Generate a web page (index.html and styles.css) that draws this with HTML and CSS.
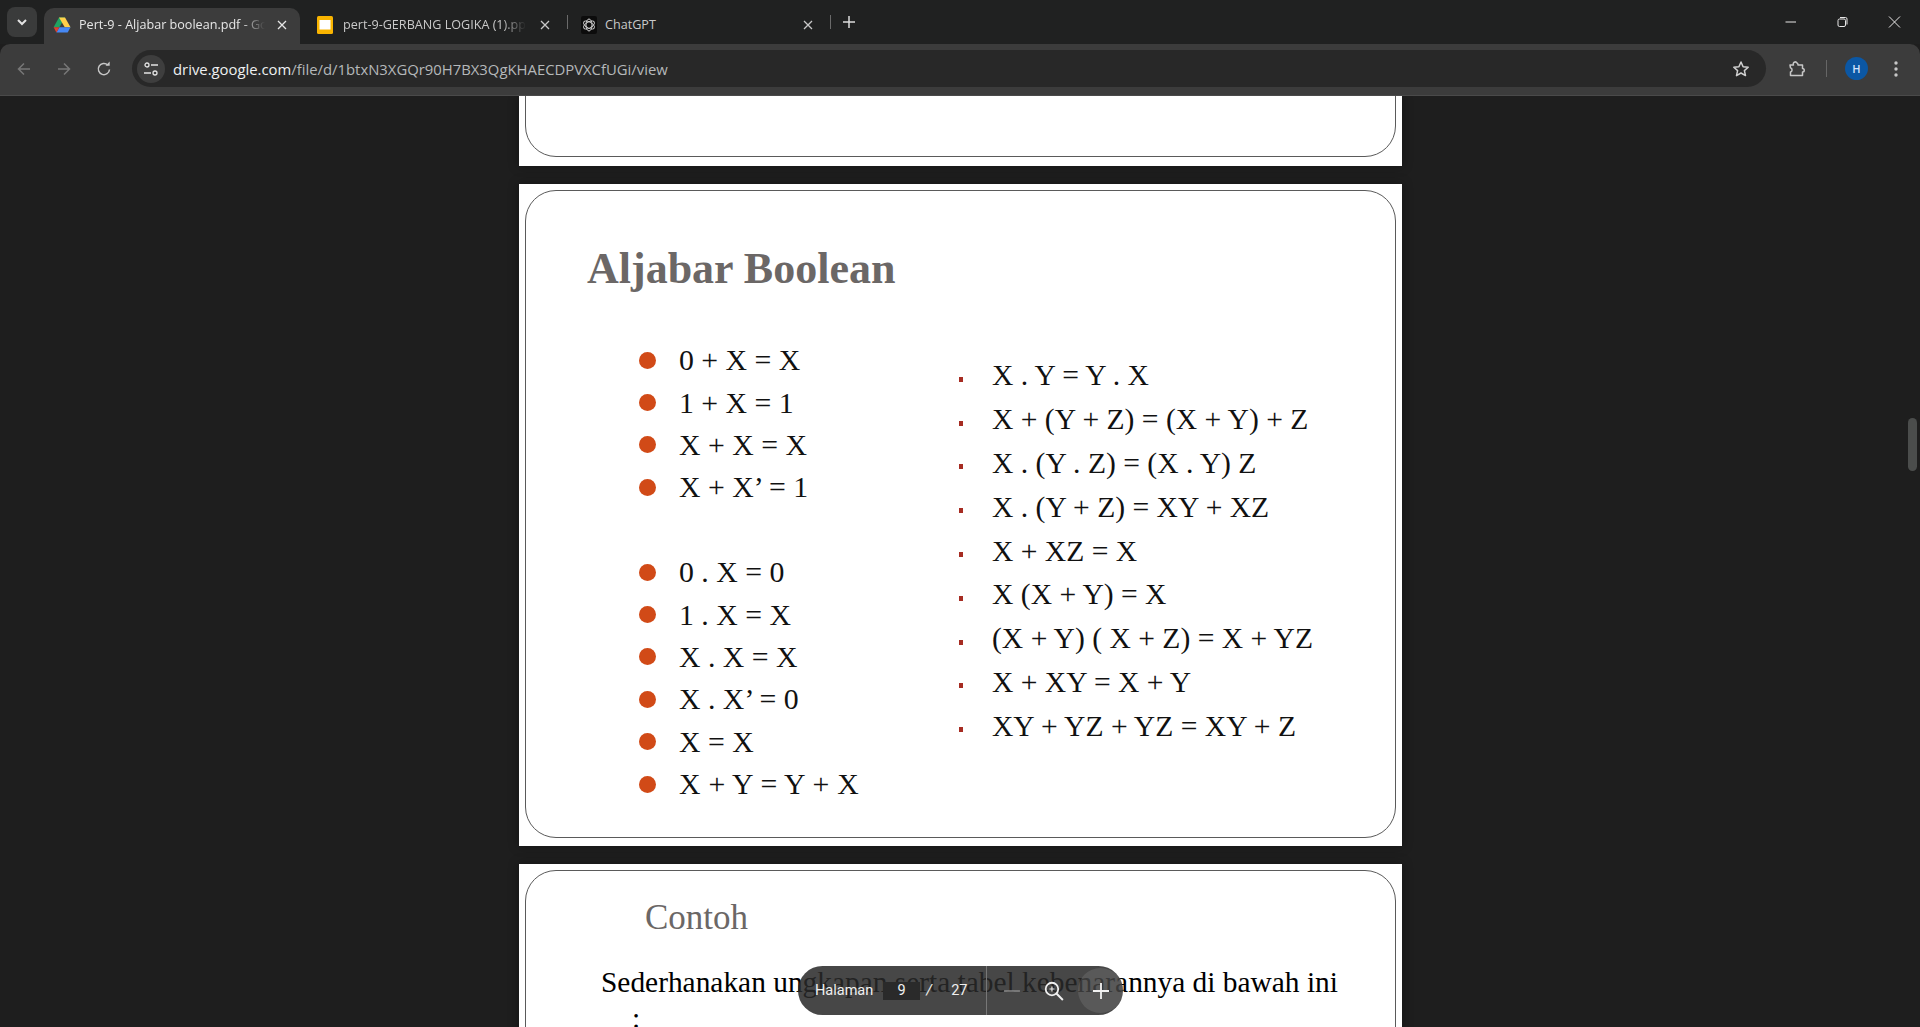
FILE: index.html
```html
<!DOCTYPE html>
<html lang="id">
<head>
<meta charset="utf-8">
<title>Pert-9 - Aljabar boolean.pdf</title>
<link rel="stylesheet" href="styles.css">
</head>
<body>
<div class="browser">
  <header class="tabstrip">
    <button class="tab-search"><svg width="12" height="12" viewBox="0 0 12 12"><path d="M2 4l4 4 4-4" fill="none" stroke="#e3e3e3" stroke-width="2"/></svg></button>
    <div class="tab tab-active">
      <svg class="fav" viewBox="0 0 24 22"><path d="M8 1h8L8.500 14H0.800z" fill="#1fa463"/><path d="M16 1l7.400 13h-7.700L8 1z" fill="#ffd04b"/><path d="M8.500 14h14.900L19.600 21H4.600z" fill="#4688f4"/><path d="M.8 14h7.700L4.600 21z" fill="#e0402f"/></svg>
      <span class="tab-title">Pert-9 - Aljabar boolean.pdf - Google Drive</span>
      <svg class="tab-x" viewBox="0 0 10 10"><path d="M1 1l8 8M9 1l-8 8" stroke="#e6e6e6" stroke-width="1.300"/></svg>
    </div>
    <div class="tab tab-slides">
      <svg class="fav" viewBox="0 0 16 18"><rect width="16" height="18" rx="1.500" fill="#f9b400"/><rect x="2.500" y="4" width="11" height="9.500" fill="#fff"/></svg>
      <span class="tab-title">pert-9-GERBANG LOGIKA (1).pptx</span>
      <svg class="tab-x" viewBox="0 0 10 10"><path d="M1 1l8 8M9 1l-8 8" stroke="#c8c8c8" stroke-width="1.300"/></svg>
    </div>
    <i class="tab-sep"></i>
    <div class="tab tab-wide">
      <svg class="fav" viewBox="0 0 16 18"><rect width="16" height="18" rx="2" fill="#0c0c0c"/><g fill="none" stroke="#cfcfcf" stroke-width="1"><ellipse cx="8" cy="9" rx="3" ry="6"/><ellipse cx="8" cy="9" rx="3" ry="6" transform="rotate(60 8 9)"/><ellipse cx="8" cy="9" rx="3" ry="6" transform="rotate(120 8 9)"/></g></svg>
      <span class="tab-title">ChatGPT</span>
      <svg class="tab-x" viewBox="0 0 10 10"><path d="M1 1l8 8M9 1l-8 8" stroke="#c8c8c8" stroke-width="1.300"/></svg>
    </div>
    <i class="tab-sep"></i>
    <svg class="new-tab" viewBox="0 0 12 12"><path d="M6 0v12M0 6h12" stroke="#dcdcdc" stroke-width="1.500"/></svg>
    <div class="window-controls">
      <svg viewBox="0 0 12 12"><path d="M1 6h10.500" stroke="#e8e8e8"/></svg>
      <svg viewBox="0 0 12 12"><rect x="1.500" y="3" width="7.500" height="7.500" rx="1.500" fill="none" stroke="#e8e8e8"/><path d="M3.500 1.500h5.500a1.500 1.500 0 0 1 1.500 1.500v5.500" fill="none" stroke="#e8e8e8"/></svg>
      <svg viewBox="0 0 12 12"><path d="M.5.500l11 11M11.500.500l-11 11" stroke="#e8e8e8"/></svg>
    </div>
  </header>

  <nav class="toolbar">
    <svg class="tool tool-dim" viewBox="0 0 16 16"><path d="M14 8H3M8 2.500L2.500 8 8 13.500" fill="none" stroke="#777" stroke-width="1.500"/></svg>
    <svg class="tool tool-dim" viewBox="0 0 16 16"><path d="M2 8h11M8 2.500L13.500 8 8 13.500" fill="none" stroke="#777" stroke-width="1.500"/></svg>
    <svg class="tool" viewBox="0 0 16 16"><path d="M13.500 8.500A5.600 5.600 0 1 1 11.800 4" fill="none" stroke="#c7c7c7" stroke-width="1.500"/><path d="M9.500 4.700h4.200V.500z" fill="#c7c7c7"/></svg>
    <div class="omnibox">
      <span class="chip"><svg viewBox="0 0 16 16" width="16" height="16"><g fill="none" stroke="#e3e3e3" stroke-width="1.300"><circle cx="4" cy="4" r="2"/><path d="M8 4h7M1 12h7"/><circle cx="12" cy="12" r="2"/></g></svg></span>
      <span class="url"><b>drive.google.com</b>/file/d/1btxN3XGQr90H7BX3QgKHAECDPVXCfUGi/view</span>
      <svg class="star" viewBox="0 0 18 18"><path d="M9 2l2.100 4.700 5.100.500-3.800 3.400 1.100 5L9 13l-4.500 2.600 1.100-5L1.800 7.200l5.100-.500z" fill="none" stroke="#d0d0d0" stroke-width="1.500" stroke-linejoin="round"/></svg>
    </div>
    <svg class="ext" viewBox="0 0 18 18"><path d="M2 5h3.500a2 2 0 0 1 3.500-2 2 2 0 0 1 1 2H14.500v3.500a1.700 1.700 0 0 1 0 3.500v3.500H2.500V12a2.200 2.200 0 0 0 0-4.200z" fill="none" stroke="#c7c7c7" stroke-width="1.500" stroke-linejoin="round"/></svg>
    <i class="tool-sep"></i>
    <span class="avatar">H</span>
    <svg class="menu" viewBox="0 0 4 16"><circle cx="2" cy="2" r="1.700" fill="#c7c7c7"/><circle cx="2" cy="8" r="1.700" fill="#c7c7c7"/><circle cx="2" cy="14" r="1.700" fill="#c7c7c7"/></svg>
  </nav>

  <main class="viewer">
    <section class="page page-prev"><div class="frame"></div></section>

    <section class="page page-main">
      <div class="frame frame-main">
        <h1 class="slide-title">Aljabar Boolean</h1>
        <div class="columns">
          <ul class="list-left">
            <li>0 + X = X</li>
            <li>1 + X = 1</li>
            <li>X + X = X</li>
            <li>X + X’ = 1</li>
            <li class="blank"></li>
            <li>0 . X = 0</li>
            <li>1 . X = X</li>
            <li>X . X = X</li>
            <li>X . X’ = 0</li>
            <li>X = X</li>
            <li class="spaced">X + Y = Y + X</li>
          </ul>
          <ul class="list-right">
            <li>X . Y = Y . X</li>
            <li>X + (Y + Z) = (X + Y) + Z</li>
            <li>X . (Y . Z) = (X . Y) Z</li>
            <li>X . (Y + Z) = XY + XZ</li>
            <li>X + XZ = X</li>
            <li>X (X + Y) = X</li>
            <li>(X + Y) ( X + Z) = X + YZ</li>
            <li>X + XY = X + Y</li>
            <li>XY + YZ + YZ = XY + Z</li>
          </ul>
        </div>
      </div>
    </section>

    <section class="page page-next">
      <div class="frame frame-next">
        <h2 class="next-title">Contoh</h2>
        <p class="next-text">Sederhanakan ungkapan serta tabel kebenarannya di bawah ini</p>
        <p class="next-colon">:</p>
      </div>
    </section>

    <div class="pdf-bar">
      <span class="bar-label">Halaman</span>
      <span class="bar-input">9</span>
      <span class="bar-slash">/</span>
      <span class="bar-total">27</span>
      <i class="bar-divider"></i>
      <svg class="bar-minus" viewBox="0 0 16 2"><path d="M0 1h16" stroke="#8a8a8a" stroke-width="1.500"/></svg>
      <svg class="bar-zoom" viewBox="0 0 20 20"><circle cx="8" cy="8" r="6.300" fill="none" stroke="#f0f0f0" stroke-width="1.800"/><path d="M12.500 12.500L19 19" stroke="#f0f0f0" stroke-width="2"/><path d="M8 5.500v5M5.500 8h5" stroke="#f0f0f0" stroke-width="1.200"/></svg>
      <span class="bar-plus"><svg viewBox="0 0 16 16" width="16" height="16"><path d="M8 0v16M0 8h16" stroke="#f2f2f2" stroke-width="1.800"/></svg></span>
    </div>
    <div class="scroll-thumb"></div>
  </main>
</div>
</body>
</html>
```

FILE: styles.css
```css
* { box-sizing: border-box; }
html, body { margin: 0; height: 100%; overflow: hidden; }
.browser { height: 1027px; display: flex; flex-direction: column; background: #1e1e1e; font-family: "Open Sans", "Noto Sans", sans-serif; }

.tabstrip { height: 44px; flex: none; background: #202121; display: flex; align-items: flex-end; padding-left: 7px; position: relative; }
.tab-search { width: 30px; height: 30px; margin: 0 7px 7px 0; border: 0; padding: 0; border-radius: 8px; background: #3a3b3b; display: flex; align-items: center; justify-content: center; }
.tab { width: 256px; height: 36px; padding: 0 10px 3px 10px; display: flex; align-items: center; gap: 8px; color: #c9c9c9; font-size: 12.600px; }
.tab-active { background: #3c3c3c; border-radius: 10px 10px 0 0; color: #e6e6e6; padding-left: 9px; padding-right: 13px; }
.tab-slides { width: 267px; padding-left: 17px; padding-right: 17px; gap: 10px; }
.tab-wide { width: 262px; padding-left: 13px; padding-right: 17px; }
.fav { width: 16px; height: 18px; flex: none; }
.tab-active .fav { width: 18px; }
.tab-title { flex: 1; white-space: nowrap; overflow: hidden; -webkit-mask-image: linear-gradient(to left, transparent, #000 24px); mask-image: linear-gradient(to left, transparent, #000 24px); }
.tab-wide .tab-title { -webkit-mask-image: none; mask-image: none; }
.tab-x { width: 10px; height: 10px; flex: none; margin-left: 4px; }
.tab-sep { width: 1px; height: 14px; background: #6a6a6a; margin-bottom: 15px; flex: none; }
.new-tab { width: 12px; height: 12px; margin: 0 0 16px 12px; flex: none; }
.window-controls { position: absolute; right: 19px; top: 16px; display: flex; gap: 39px; }
.window-controls svg { width: 13px; height: 12px; }

.toolbar { height: 52px; flex: none; background: #3c3c3c; border-bottom: 1px solid #4a4a4a; border-radius: 10px 10px 0 0; display: flex; align-items: center; padding: 0 0 2px 16px; }
.tool { width: 16px; height: 16px; margin-right: 24px; flex: none; }
.omnibox { width: 1634px; height: 37px; margin-left: -4px; border-radius: 19px; background: #282828; display: flex; align-items: center; padding-left: 5px; position: relative; }
.chip { width: 28px; height: 28px; border-radius: 50%; background: #3e3e3e; display: flex; align-items: center; justify-content: center; flex: none; }
.url { margin-left: 8px; font-size: 14.850px; color: #b5b8ba; flex: 1; white-space: nowrap; }
.url b { font-weight: 400; color: #eef0f1; }
.star { width: 18px; height: 18px; margin-right: 16px; flex: none; }
.ext { width: 18px; height: 18px; margin-left: 22px; flex: none; }
.tool-sep { width: 1px; height: 17px; background: #666; margin-left: 20px; flex: none; }
.avatar { width: 23px; height: 23px; margin-left: 18px; border-radius: 50%; background: #0b57a4; color: #d3e3fd; font-size: 11px; font-weight: 600; display: flex; align-items: center; justify-content: center; flex: none; }
.menu { width: 4px; height: 16px; margin-left: 26px; flex: none; }

.viewer { flex: 1; min-height: 0; overflow: hidden; position: relative; display: flex; flex-direction: column; align-items: center; gap: 18px; padding-right: 37px; padding-left: 38px; font-family: "Liberation Serif", "Times New Roman", serif; }
.page { width: 883px; flex: none; background: #fff; overflow: hidden; padding: 6px 6px 7px 6px; box-shadow: 0 0 10px rgba(0,0,0,.35); }
.frame { width: 871px; border: 1px solid #5a5a5a; border-radius: 31px; background: #fff; }

.page-prev { height: 70px; padding: 0; }
.page-prev .frame { height: 120px; margin: -59px 0 0 6px; }
.page-main { height: 662px; }
.frame-main { height: 648px; padding: 53px 0 0 61px; }
.slide-title { margin: 0; font-size: 44px; line-height: 50px; font-weight: 700; color: #6b6766; }

.columns { display: flex; margin-top: 45px; color: #111; }
.columns ul { list-style: none; margin: 0; padding: 0; }
.columns li { display: flex; align-items: center; white-space: nowrap; }
.list-left { width: 372px; padding-left: 52px !important; font-size: 29.800px; }
.list-left li { height: 42.400px; }
.list-left li::before { content: ""; width: 17px; height: 17px; border-radius: 50%; background: #d14a17; margin-right: 23px; flex: none; }
.list-left .blank::before { display: none; }
.list-left .spaced { word-spacing: .5px; }
.list-right { margin-top: 15px !important; font-size: 29.600px; }
.list-right li { height: 43.800px; }
.list-right li::before { content: ""; width: 4px; height: 5px; background: #a62c22; margin: 7px 29px 0 0; flex: none; }

.page-next { height: 300px; }
.frame-next { height: 400px; color: #000; }
.next-title { margin: 0; padding: 25px 0 0 119px; font-size: 35px; line-height: 44px; font-weight: 400; color: #6b6766; }
.next-text { margin: 22px 0 0 75px; font-size: 29.400px; line-height: 40px; white-space: nowrap; }
.next-colon { margin: -4px 0 0 106px; font-size: 29.400px; line-height: 40px; }

.pdf-bar { position: absolute; left: 798px; bottom: 12px; width: 325px; height: 49px; border-radius: 25px; background: rgba(41,41,41,.86); display: flex; align-items: center; padding-left: 17px; color: #f0f0f0; font-family: Roboto, "Noto Sans", sans-serif; font-size: 14.500px; }
.bar-label { width: 68px; }
.bar-input { width: 38px; height: 18px; background: #2a2a2a; text-align: center; line-height: 18px; }
.bar-slash { margin-left: 6px; font-style: italic; }
.bar-total { margin-left: 19px; }
.bar-divider { width: 1px; height: 49px; background: #777; margin-left: 19px; }
.bar-minus { width: 16px; height: 2px; margin-left: 16.500px; }
.bar-zoom { width: 20px; height: 20px; margin-left: 24.500px; }
.bar-plus { width: 45px; height: 45px; margin-left: 14px; border-radius: 50%; background: rgba(255,255,255,.1); display: flex; align-items: center; justify-content: center; }
.scroll-thumb { position: absolute; left: 1908px; top: 322px; width: 9px; height: 53px; border-radius: 5px; background: #4b4d4c; }
```
